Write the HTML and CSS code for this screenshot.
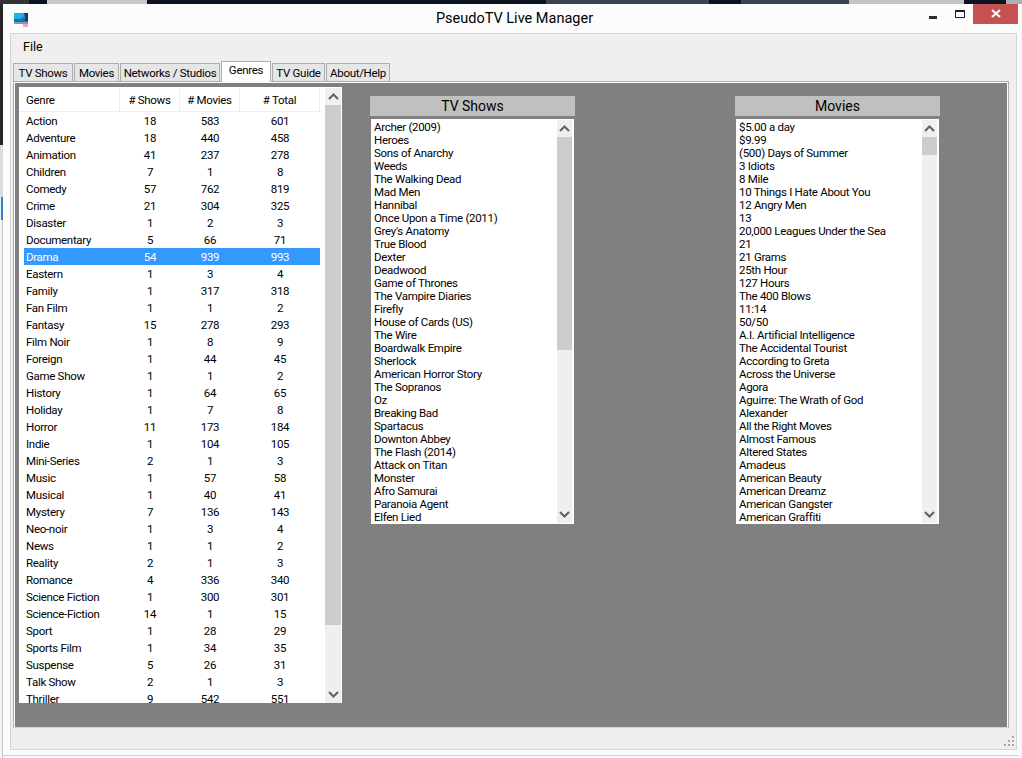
FILE: index.html
```html
<!DOCTYPE html>
<html lang="en">
<head>
	<meta charset="UTF-8">
	<title>PseudoTV Live Manager</title>
	<link rel="stylesheet" href="styles.css">
</head>
<body>
	<div id="edge"><span class="e1"></span><span class="e2"></span><span class="e3"></span></div>
	<div id="desk">
		<span class="d1"></span><span class="d2"></span><span class="d3"></span><span class="d4"></span><span class="d5"></span><span class="d6"></span>
	</div>
	<div id="win">
		<div id="title">
			<svg class="logo" width="15" height="14" viewBox="0 0 15 14">
				<rect x="0" y="0" width="14" height="10" fill="#1f6fa8"/>
				<path d="M0 0h9c2 2 1 5-3 6H0z" fill="#19b3e6"/>
				<path d="M10 0h4v8h-3c1-3 1-6-1-8z" fill="#123a66"/>
				<rect x="0" y="9" width="14" height="2" fill="#7f9cb5"/>
				<rect x="9" y="11" width="5" height="3" fill="#f3a6ae"/>
			</svg>
			<span class="name">PseudoTV Live Manager</span>
			<span class="min"></span>
			<span class="max"></span>
			<span class="close">
				<svg width="10" height="10" viewBox="0 0 10 10"><path d="M1 1l8 7M9 1L1 8" stroke="#fff" stroke-width="2" fill="none"/></svg>
			</span>
		</div>
		<div id="form">
			<div id="menu"><span>File</span></div>
			<div id="tabs">
				<span class="tab">TV Shows</span>
				<span class="tab">Movies</span>
				<span class="tab">Networks / Studios</span>
				<span class="tab on">Genres</span>
				<span class="tab">TV Guide</span>
				<span class="tab">About/Help</span>
			</div>
			<div id="page">
				<div id="panel">
					<div id="genres">
						<div class="gtable">
							<div class="ghead">
								<span class="c1">Genre</span><span class="c2">#&nbsp;Shows</span><span class="c3">#&nbsp;Movies</span><span class="c4">#&nbsp;Total</span>
							</div>
							<div class="grows" id="grows"></div>
						</div>
						<div class="sbar">
							<span class="arrow"><svg width="11" height="7" viewBox="0 0 11 7"><path d="M1 6l4.5-4.5L10 6" stroke="#606060" stroke-width="2" fill="none"/></svg></span>
							<span class="thumb gthumb"></span>
							<span class="track"></span>
							<span class="arrow"><svg width="11" height="7" viewBox="0 0 11 7"><path d="M1 1l4.5 4.5L10 1" stroke="#606060" stroke-width="2" fill="none"/></svg></span>
						</div>
					</div>
					<div class="col col-tv">
						<div class="chead">TV Shows</div>
						<div class="lbox">
							<div class="items" id="tv"></div>
							<div class="sbar small">
								<span class="arrow"><svg width="11" height="7" viewBox="0 0 11 7"><path d="M1 6l4.5-4.5L10 6" stroke="#606060" stroke-width="2" fill="none"/></svg></span>
								<span class="thumb tvthumb"></span>
								<span class="track"></span>
								<span class="arrow"><svg width="11" height="7" viewBox="0 0 11 7"><path d="M1 1l4.5 4.5L10 1" stroke="#606060" stroke-width="2" fill="none"/></svg></span>
							</div>
						</div>
					</div>
					<div class="col col-mv">
						<div class="chead">Movies</div>
						<div class="lbox">
							<div class="items" id="mv"></div>
							<div class="sbar small">
								<span class="arrow"><svg width="11" height="7" viewBox="0 0 11 7"><path d="M1 6l4.5-4.5L10 6" stroke="#606060" stroke-width="2" fill="none"/></svg></span>
								<span class="thumb mvthumb"></span>
								<span class="track"></span>
								<span class="arrow"><svg width="11" height="7" viewBox="0 0 11 7"><path d="M1 1l4.5 4.5L10 1" stroke="#606060" stroke-width="2" fill="none"/></svg></span>
							</div>
						</div>
					</div>
				</div>
			</div>
			<div id="status">
				<svg width="10" height="10" viewBox="0 0 10 10" fill="#a8a8a8">
					<rect x="8" y="0" width="2" height="2"/><rect x="4" y="4" width="2" height="2"/><rect x="8" y="4" width="2" height="2"/>
					<rect x="0" y="8" width="2" height="2"/><rect x="4" y="8" width="2" height="2"/><rect x="8" y="8" width="2" height="2"/>
				</svg>
			</div>
		</div>
	</div>
	<script src="app.js"></script>
</body>
</html>
```

FILE: styles.css
```css
*{
	box-sizing: border-box;
}
html,body{
	margin: 0;
	height: 100%;
}
body{
	width: 1022px;
	height: 758px;
	overflow: hidden;
	position: relative;
	background: #f8f8f8;
	font-family: "Roboto","Liberation Sans",sans-serif;
	font-size: 11.5px;
	letter-spacing: -.3px;
	color: #000;
}
#edge{
	position: absolute;
	left: 0;
	top: 0;
	width: 3px;
	height: 758px;
	background: #f4f4f4;
	border-right: 1px solid #c8c8c8;
}
#edge span{
	display: block;
	position: absolute;
	left: 0;
	width: 3px;
}
#edge .e1{
	top: 0;
	height: 145px;
	background: #262626;
}
#edge .e2{
	top: 145px;
	height: 52px;
	background: #dcdcdc;
}
#edge .e3{
	top: 197px;
	height: 23px;
	left: 1px;
	width: 2px;
	background: #2f7fd0;
}
#desk{
	height: 4px;
	display: flex;
	background: #0c1320;
	position: relative;
}
#desk span{
	display: block;
	height: 4px;
}
#desk .d1{
	width: 29px;
	background: #333;
}
#desk .d2{
	width: 100px;
	margin-left: 18px;
	background: #c8c8c8;
}
#desk .d3{
	width: 164px;
	margin-left: 399px;
	background: #3b4352;
}
#desk .d4{
	width: 108px;
	margin-left: 32px;
	background: #3b4352;
}
#desk .d5{
	width: 115px;
	background: #c4c4c4;
}
#desk .d6{
	width: 16px;
	margin-left: 42px;
	background: #b0b0b0;
}
#win{
	width: 1016px;
	height: 752px;
	margin-left: 3px;
	background: #fcfcfc;
	border-bottom: 1px solid #d0d0d0;
	padding: 0 0 0 7px;
	position: relative;
}
#title{
	height: 29px;
	display: flex;
	align-items: flex-start;
	position: relative;
}
.logo{
	margin: 9px 0 0 4px;
}
.name{
	position: absolute;
	left: 0;
	right: 0;
	top: 6px;
	text-align: center;
	font-size: 14.5px;
	letter-spacing: 0;
}
.min{
	position: absolute;
	left: 919px;
	top: 12px;
	width: 8px;
	height: 3px;
	background: #2a2a2a;
}
.max{
	position: absolute;
	left: 945px;
	top: 6px;
	width: 10px;
	height: 8px;
	border: 1px solid #222;
	border-top-width: 2px;
}
.close{
	position: absolute;
	left: 963px;
	top: 0;
	width: 45px;
	height: 20px;
	background: #c75050;
	display: flex;
	align-items: center;
	justify-content: center;
}
#form{
	width: 1007px;
	height: 717px;
	background: #efefef;
	border: 1px solid #d4d4d4;
	padding: 0 0 0 2px;
	display: flex;
	flex-direction: column;
}
#menu{
	height: 27px;
	padding: 5px 0 0 10px;
	font-size: 12.5px;
	letter-spacing: 0;
}
#tabs{
	height: 20px;
	display: grid;
	grid-template-columns: 60px 45px 100px 50px 53px 64px;
	column-gap: 1px;
	align-items: end;
}
.tab{
	height: 18px;
	padding-top: 2px;
	border: 1px solid #acacac;
	border-bottom: none;
	background: #e6e6e6;
	white-space: nowrap;
	text-align: center;
}
.tab.on{
	height: 21px;
	margin-bottom: -1px;
	padding-top: 1px;
	background: #fff;
	position: relative;
	z-index: 1;
}
#page{
	width: 996px;
	height: 647px;
	flex: none;
	border: 1px solid #acacac;
	border-bottom-color: #d4d4d4;
	background: #fff;
	padding: 1px 1px 0;
}
#panel{
	height: 644px;
	background: #808080;
	display: flex;
	align-items: flex-start;
	padding: 4px 0 0 4px;
}
#genres{
	width: 323px;
	height: 616px;
	background: #fff;
	display: flex;
	justify-content: space-between;
	padding-top: 2px;
}
.gtable{
	width: 302px;
	overflow: hidden;
}
.ghead{
	height: 23px;
	display: flex;
	border-bottom: 1px solid #e6eef7;
}
.ghead span{
	display: block;
	line-height: 22px;
	border-right: 1px solid #e6eef7;
}
.c1{
	width: 101px;
	padding-left: 7px;
}
.c2{
	width: 60px;
	text-align: center;
}
.c3{
	width: 60px;
	text-align: center;
}
.c4{
	width: 80px;
	text-align: center;
}
.grows{
	padding: 0 0 0 5px;
}
.grow{
	height: 17px;
	display: flex;
	line-height: 17px;
	padding-top: 1px;
	width: 296px;
	white-space: nowrap;
}
.grow.sel{
	background: #3399ff;
	color: #fff;
}
.grow .g1{
	width: 96px;
	padding-left: 2px;
}
.grow .g2,.grow .g3{
	width: 60px;
	text-align: center;
}
.grow .g4{
	width: 80px;
	text-align: center;
}
.sbar{
	width: 16px;
	height: 615px;
	margin: -1px 1px 0 0;
	background: #efefef;
	display: flex;
	flex-direction: column;
}
.sbar span{
	display: block;
}
.sbar .arrow{
	height: 17px;
	display: flex;
	align-items: center;
	justify-content: center;
	flex: none;
}
.sbar .thumb{
	background: #cdcdcd;
	flex: none;
}
.sbar .track{
	flex: 1;
}
.gthumb{
	height: 520px;
}
.col{
	width: 205px;
}
.col-tv{
	margin: 9px 0 0 28px;
}
.col-mv{
	margin: 9px 0 0 160px;
}
.chead{
	height: 20px;
	background: #c0c0c0;
	text-align: center;
	font-size: 14px;
	letter-spacing: 0;
	line-height: 21px;
}
.lbox{
	width: 203px;
	height: 405px;
	margin: 3px 0 0 1px;
	background: #fff;
	padding: 1px 2px 1px 3px;
	display: flex;
	justify-content: space-between;
}
.items{
	width: 180px;
	overflow: hidden;
	white-space: nowrap;
	line-height: 13px;
	padding-top: 1px;
}
.items div{
	height: 13px;
}
.sbar.small{
	width: 15px;
	height: 403px;
	margin: 0;
}
.tvthumb{
	height: 213px;
}
.mvthumb{
	height: 18px;
}
#status{
	flex: 1;
	display: flex;
	justify-content: flex-end;
	align-items: flex-end;
	padding: 0 2px 3px 0;
}
```

FILE: app.js
```js
var genres=[
	["Action",18,583,601],["Adventure",18,440,458],["Animation",41,237,278],["Children",7,1,8],
	["Comedy",57,762,819],["Crime",21,304,325],["Disaster",1,2,3],["Documentary",5,66,71],
	["Drama",54,939,993],["Eastern",1,3,4],["Family",1,317,318],["Fan Film",1,1,2],
	["Fantasy",15,278,293],["Film Noir",1,8,9],["Foreign",1,44,45],["Game Show",1,1,2],
	["History",1,64,65],["Holiday",1,7,8],["Horror",11,173,184],["Indie",1,104,105],
	["Mini-Series",2,1,3],["Music",1,57,58],["Musical",1,40,41],["Mystery",7,136,143],
	["Neo-noir",1,3,4],["News",1,1,2],["Reality",2,1,3],["Romance",4,336,340],
	["Science Fiction",1,300,301],["Science-Fiction",14,1,15],["Sport",1,28,29],["Sports Film",1,34,35],
	["Suspense",5,26,31],["Talk Show",2,1,3],["Thriller",9,542,551]
];
var shows=["Archer (2009)","Heroes","Sons of Anarchy","Weeds","The Walking Dead","Mad Men","Hannibal","Once Upon a Time (2011)","Grey's Anatomy","True Blood","Dexter","Deadwood","Game of Thrones","The Vampire Diaries","Firefly","House of Cards (US)","The Wire","Boardwalk Empire","Sherlock","American Horror Story","The Sopranos","Oz","Breaking Bad","Spartacus","Downton Abbey","The Flash (2014)","Attack on Titan","Monster","Afro Samurai","Paranoia Agent","Elfen Lied"];
var movies=["$5.00 a day","$9.99","(500) Days of Summer","3 Idiots","8 Mile","10 Things I Hate About You","12 Angry Men","13","20,000 Leagues Under the Sea","21","21 Grams","25th Hour","127 Hours","The 400 Blows","11:14","50/50","A.I. Artificial Intelligence","The Accidental Tourist","According to Greta","Across the Universe","Agora","Aguirre: The Wrath of God","Alexander","All the Right Moves","Almost Famous","Altered States","Amadeus","American Beauty","American Dreamz","American Gangster","American Graffiti"];

var html="";
for(var i=0;i<genres.length;i++){
	var g=genres[i];
	html+='<div class="grow'+(g[0]=="Drama"?' sel':'')+'"><span class="g1">'+g[0]+'</span><span class="g2">'+g[1]+'</span><span class="g3">'+g[2]+'</span><span class="g4">'+g[3]+'</span></div>';
}
document.getElementById("grows").innerHTML=html;

function fill(id,list){
	var out="";
	for(var j=0;j<list.length;j++)
		out+="<div>"+list[j]+"</div>";
	document.getElementById(id).innerHTML=out;
}
fill("tv",shows);
fill("mv",movies);
```
